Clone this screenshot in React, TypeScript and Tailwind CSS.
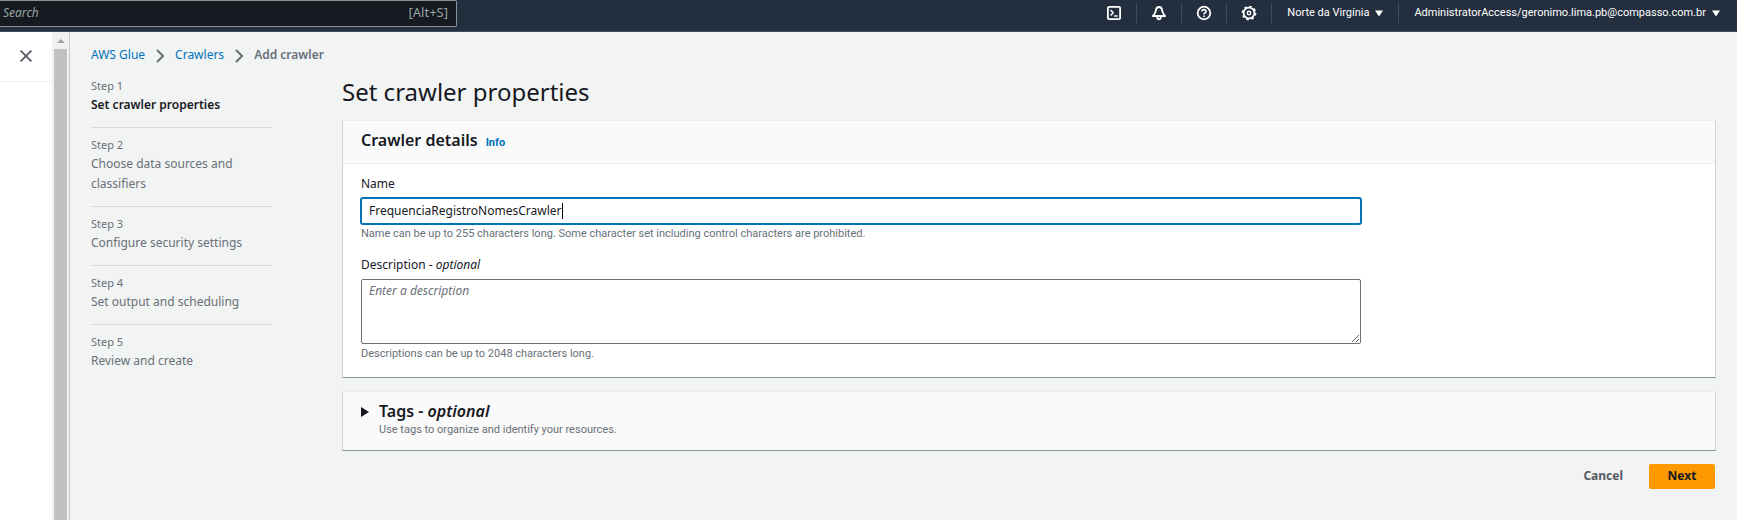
import { useState } from "react";
import type { ReactNode } from "react";

const steps = [
  "Set crawler properties",
  "Choose data sources and classifiers",
  "Configure security settings",
  "Set output and scheduling",
  "Review and create",
];

function Icon({ children }: { children: ReactNode }) {
  return (
    <svg viewBox="0 0 16 16" className="size-4" fill="none" stroke="currentColor" strokeWidth="1.8" strokeLinejoin="round" aria-hidden="true">
      {children}
    </svg>
  );
}

function IconButton({ label, children }: { label: string; children: ReactNode }) {
  return (
    <button type="button" aria-label={label} className="flex h-5 w-[45px] items-center justify-center border-r border-[#414d5c]">
      {children}
    </button>
  );
}

function Caret() {
  return (
    <svg viewBox="0 0 8 7" className="h-[7px] w-2 fill-current" aria-hidden="true">
      <path d="M0 0.5h8L4 6.5z" />
    </svg>
  );
}

function Chevron() {
  return (
    <svg viewBox="0 0 8 14" className="mt-[2px] h-[14px] w-2 shrink-0" fill="none" stroke="#687078" strokeWidth="2" aria-hidden="true">
      <path d="M1 1l6 6-6 6" />
    </svg>
  );
}

function TopBar() {
  return (
    <header className="flex h-8 shrink-0 items-start justify-between border-b border-[#414d5c] bg-[#232f3e] text-white">
      <label className="flex h-[27px] w-[457px] items-center justify-between rounded-r-xs border border-l-0 border-[#879596] bg-[#16191f] pr-2 pb-[2px] pl-[3px] text-[#95a5a6]">
        <input type="search" aria-label="Search" placeholder="Search" className="min-w-0 flex-1 bg-transparent text-xs italic outline-none placeholder:text-[#95a5a6]" />
        <span className="text-[13px]">[Alt+S]</span>
      </label>
      <nav className="flex h-[26px] items-center font-['Roboto','Noto_Sans',sans-serif] text-[11px]">
        <IconButton label="CloudShell">
          <Icon>
            <rect x="1.900" y="1.900" width="12.200" height="12.200" rx="1.200" />
            <path d="M4.600 5l2.600 2.800-2.600 2.800M8.200 11h3.400" strokeWidth="1.500" />
          </Icon>
        </IconButton>
        <IconButton label="Notifications">
          <Icon>
            <path d="M8 2c-2.200 0-2.900 1.600-3.100 3.400C4.600 8 3.600 9 1.800 11h12.400c-1.800-2-2.800-3-3.100-5.600C10.900 3.600 10.200 2 8 2z" />
            <path d="M6.200 12c0 3 3.600 3 3.600 0" />
          </Icon>
        </IconButton>
        <IconButton label="Help">
          <Icon>
            <circle cx="8" cy="8" r="6.300" />
            <path d="M6 6.600c0-2.600 4-2.600 4-.2C10 8 8 7.800 8 9.400M8 10.500v1.500" strokeWidth="1.600" />
          </Icon>
        </IconButton>
        <IconButton label="Settings">
          <Icon>
            <circle cx="8" cy="8" r="5.400" />
            <circle cx="8" cy="8" r="6.600" strokeWidth="1.500" strokeDasharray="2.600 2.584" />
            <circle cx="8" cy="8" r="1.700" strokeWidth="1.500" />
          </Icon>
        </IconButton>
        <button type="button" className="flex h-5 items-center gap-[6px] border-r border-[#414d5c] px-[15px]">
          Norte da Virgínia <Caret />
        </button>
        <button type="button" className="flex h-5 items-center gap-[6px] pr-[17px] pl-[15px]">
          AdministratorAccess/geronimo.lima.pb@compasso.com.br <Caret />
        </button>
      </nav>
    </header>
  );
}

function SidePanel() {
  return (
    <aside className="flex shrink-0 border-r border-[#c6cccc] bg-white">
      <div className="w-[52px]">
        <div className="flex h-[50px] items-center justify-center border-b border-[#eaeded] pb-px">
          <button type="button" aria-label="Close navigation">
            <svg viewBox="0 0 12 12" className="size-3" stroke="#545b64" strokeWidth="1.800" aria-hidden="true">
              <path d="M.6.6l10.800 10.800M11.400.6L.6 11.400" />
            </svg>
          </button>
        </div>
      </div>
      <div className="flex w-[17px] flex-col items-center bg-[#f1f1f1]">
        <div className="flex h-[17px] items-center">
          <svg viewBox="0 0 8 4" className="h-1 w-2 fill-[#a3a3a3]" aria-hidden="true">
            <path d="M4 0l4 4H0z" />
          </svg>
        </div>
        <div className="w-[13px] flex-1 bg-[#c1c1c1]" />
      </div>
    </aside>
  );
}

export default function App() {
  const [name, setName] = useState("FrequenciaRegistroNomesCrawler");
  const [description, setDescription] = useState("");
  const [touched, setTouched] = useState(false);
  const card = "border border-x-[#cdd2d2] border-t-[#eaeded] border-b-[#879596]";
  const hint = "font-['Roboto','Noto_Sans',sans-serif] text-[11px] text-[#687078]";

  return (
    <div className="flex min-h-screen flex-col bg-[#f2f3f3] font-['Noto_Sans','Open_Sans',sans-serif] text-xs text-[#16191f]">
      <TopBar />
      <div className="flex flex-1">
        <SidePanel />
        <main className="min-w-0 flex-1 pt-[13px] pr-[21px] pb-6 pl-[21px]">
          <nav aria-label="Breadcrumb" className="flex h-5 items-center gap-[11px]">
            <a href="#glue" className="text-[#0073bb]">AWS Glue</a>
            <Chevron />
            <a href="#crawlers" className="text-[#0073bb]">Crawlers</a>
            <Chevron />
            <span className="font-semibold text-[#687078]">Add crawler</span>
          </nav>

          <div className="flex">
            <ol className="mt-[11px] w-[180px] shrink-0 text-[#687078]">
              {steps.map((step, i) => (
                <li key={step} className="border-b border-[#d5dbdb] pb-3 not-first:pt-[7px] last:border-b-0">
                  <div className="text-[11px] leading-[19px]">Step {i + 1}</div>
                  <div className={i === 0 ? "leading-5 font-semibold text-[#16191f]" : "leading-5"}>{step}</div>
                </li>
              ))}
            </ol>

            <form className="ml-[71px] min-w-0 flex-1" onSubmit={(e) => e.preventDefault()}>
              <h1 className="mt-[9px] text-2xl leading-9">Set crawler properties</h1>

              <section className={`mt-[10px] bg-white ${card}`}>
                <div className="flex h-[43px] items-baseline gap-2 border-b border-[#eaeded] bg-[#fafafa] px-[18px] pt-[7px]">
                  <h2 className="text-base font-semibold">Crawler details</h2>
                  <a href="#info" className="font-['Roboto','Noto_Sans',sans-serif] text-[11px] font-bold text-[#0073bb]">Info</a>
                </div>
                <div className="px-[18px] pt-[10px] pb-[13px]">
                  <div className="w-3/4 max-w-[1000px]">
                    <label htmlFor="name" className="block leading-5">Name</label>
                    <div className="relative mt-1 mb-px">
                      <input
                        id="name"
                        value={name}
                        onFocus={() => setTouched(true)}
                        onChange={(e) => setName(e.target.value)}
                        className="block h-[26px] w-full rounded-xs border border-[#0073bb] bg-white px-[7px] pb-[2px] ring-1 ring-[#0073bb] outline-none"
                      />
                      {!touched && <span className="pointer-events-none absolute top-[5px] left-[201px] h-4 w-px bg-black" />}
                    </div>
                    <p className={`leading-[18px] ${hint}`}>Name can be up to 255 characters long. Some character set including control characters are prohibited.</p>
                    <label htmlFor="description" className="mt-3 block leading-5">
                      Description - <i>optional</i>
                    </label>
                    <textarea
                      id="description"
                      value={description}
                      onChange={(e) => setDescription(e.target.value)}
                      placeholder="Enter a description"
                      className="mt-1 block h-[65px] w-full rounded-xs border border-[#687078] px-[7px] py-[2px] leading-[18px] outline-none placeholder:text-[#687078] placeholder:italic"
                    />
                    <p className={`leading-5 ${hint}`}>Descriptions can be up to 2048 characters long.</p>
                  </div>
                </div>
              </section>

              <section className={`mt-[13px] bg-[#fafafa] ${card}`}>
                <button type="button" aria-expanded="false" className="flex w-full gap-[10px] px-[18px] pt-[7px] pb-[13px] text-left">
                  <svg viewBox="0 0 8 10" className="mt-2 h-[10px] w-2 fill-[#16191f]" aria-hidden="true">
                    <path d="M0 0l8 5-8 5z" />
                  </svg>
                  <span>
                    <span className="block text-base leading-6 font-semibold">
                      Tags - <i>optional</i>
                    </span>
                    <span className={`block leading-[14px] ${hint}`}>Use tags to organize and identify your resources.</span>
                  </span>
                </button>
              </section>

              <div className="mt-[13px] flex justify-end gap-[6px] pr-px font-bold">
                <button type="button" className="h-[25px] px-5 pb-[2px] text-[#545b64]">Cancel</button>
                <button type="submit" className="h-[25px] w-[66px] rounded-xs bg-[#ff9900] pb-[2px]">Next</button>
              </div>
            </form>
          </div>
        </main>
      </div>
    </div>
  );
}
